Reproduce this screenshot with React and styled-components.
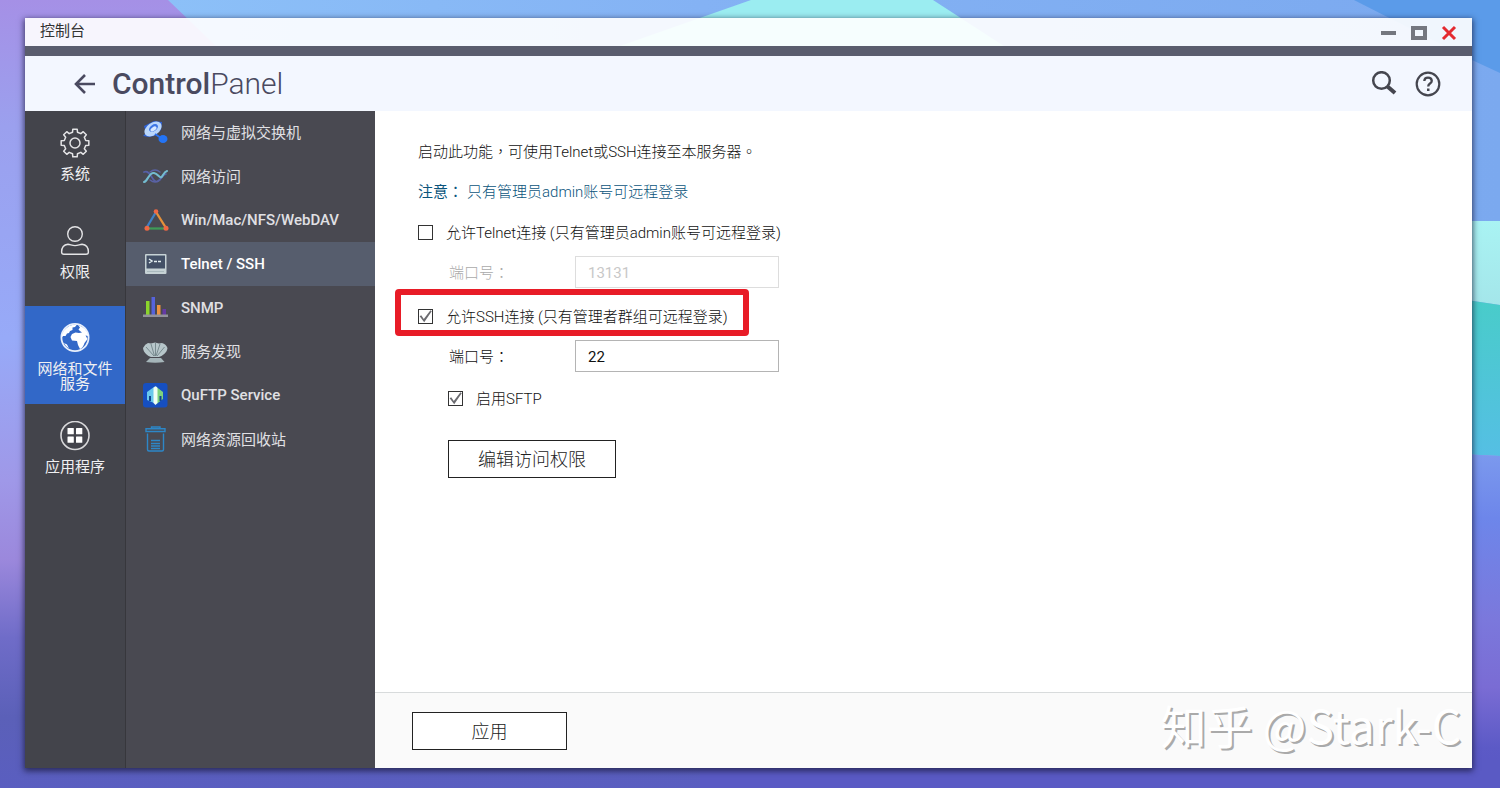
import React, { useState } from 'react'
import styled, { createGlobalStyle } from 'styled-components'

const GlobalStyle = createGlobalStyle`
    * {
        box-sizing: border-box;
    }
    body {
        margin: 0;
        font-family: Roboto, "Noto Sans CJK SC", sans-serif;
        font-size: 15px;
    }
    button, input {
        font: inherit;
    }
`

const Desktop = styled.div`
    position: relative;
    display: flex;
    min-height: 100vh;
    padding: 18px 28px 20px 25px;
    background: linear-gradient(#a590e6, #9ba0ee 16%, #97aaf8 43%, #9f98e8 61%, #9b88dc 71%, #6f6cc8 81%, #5b60b8 91%, #5a5ec0);
`

const Wallpaper = styled.svg`
    position: absolute;
    inset: 0;
    width: 100%;
    height: 100%;
`

const Window = styled.div`
    position: relative;
    flex: 1;
    display: flex;
    flex-direction: column;
    box-shadow: 0 2px 6px 1px rgba(20, 20, 50, 0.7);
`

const TitleBar = styled.div`
    display: flex;
    justify-content: space-between;
    height: 28px;
    padding: 0 15px;
    background: rgba(255, 255, 255, 0.91);
    color: #333;
    line-height: 26px;
`

const WindowButtons = styled.div`
    display: flex;
    align-items: flex-start;
    gap: 14px;
    padding-top: 7px;
`

const IconButton = styled.button`
    display: flex;
    padding: 0;
    border: 0;
    background: none;
    color: ${props => props.$color || '#45464f'};
    cursor: pointer;
`

const Header = styled.header`
    display: flex;
    align-items: center;
    height: 65px;
    padding: 0 31px 0 48px;
    border-top: 10px solid #5a5d6e;
    background: #f3f7ff;
`

const Title = styled.h1`
    flex: 1;
    margin: 0 0 0 16px;
    color: #4a4a60;
    font-size: 30px;
    font-weight: 300;

    strong {
        font-weight: 500;
    }
`

const HeaderTools = styled.div`
    display: flex;
    gap: 18px;
`

const Body = styled.div`
    flex: 1;
    display: flex;
`

const Rail = styled.nav`
    width: 101px;
    border-right: 1px solid #37373c;
    background: #43444b;
`

const RailList = styled.div`
    display: grid;
    grid-auto-rows: 1fr;
    height: 390px;
`

const RailItem = styled.a`
    display: flex;
    flex-direction: column;
    align-items: center;
    gap: 9px;
    padding: 17px 12px 0;
    background: ${props => props.$active ? '#3268c8' : 'none'};
    color: #f0f0f2;
    line-height: 15px;
    text-align: center;
    text-decoration: none;
`

const SubMenu = styled.nav`
    width: 249px;
    background: #494951;
`

const SubList = styled.div`
    display: grid;
    grid-auto-rows: 1fr;
    height: 350px;
`

const SubItem = styled.a`
    display: flex;
    align-items: center;
    gap: 12px;
    padding-left: 16px;
    background: ${props => props.$active ? '#565d6d' : 'none'};
    color: ${props => props.$active ? '#fff' : '#e0e0e4'};
    font-weight: ${props => props.$latin ? 500 : 400};
    text-decoration: none;
`

const SubLabel = styled.span`
    padding-bottom: ${props => props.$latin ? '0' : '2px'};
`

const Main = styled.main`
    flex: 1;
    display: flex;
    flex-direction: column;
    background: #fff;
    color: #111;
    font-family: Roboto, "Noto Sans CJK TC", sans-serif;
`

const Form = styled.div`
    flex: 1;
    padding: 21px 43px;
`

const Text = styled.p`
    margin: 0;
    color: ${props => props.$note ? '#0b557c' : '#111'};
    font-weight: 300;
    line-height: 40px;

    strong {
        font-weight: 400;
        margin-right: 4px;
    }
`

const Group = styled.section`
    margin-bottom: 4px;
`

const CheckRow = styled.label`
    position: relative;
    display: flex;
    align-items: center;
    gap: 13px;
    width: fit-content;
    height: ${props => props.$nested ? '44px' : '40px'};
    margin-left: ${props => props.$nested ? '30px' : '0'};
    font-weight: 300;
`

const LabelText = styled.span`
    padding-bottom: 2px;
`

const Marker = styled.span`
    position: absolute;
    inset: -7px -21px 0 -23px;
    border: 6px solid #e81c27;
    border-radius: 4px;
    pointer-events: none;
`

const Checkbox = styled.input`
    appearance: none;
    width: 15px;
    height: 15px;
    margin: 0;
    border: 1px solid #333;
    background: #fff;

    &:checked::before {
        content: "";
        display: block;
        height: 13px;
        background: #6b6b70;
        clip-path: polygon(5% 52%, 17% 44%, 37% 74%, 88% 6%, 98% 14%, 40% 98%);
    }
`

const PortRow = styled.label`
    display: grid;
    grid-template-columns: 126px 204px;
    align-items: center;
    height: 40px;
    margin-left: 31px;
    color: ${props => props.$off ? '#aaa' : '#111'};
    font-weight: 300;
`

const PortInput = styled.input`
    height: 32px;
    padding: 2px 12px 0;
    border: 1px solid #b4b4b4;
    border-radius: 0;
    background: #fff;
    color: #111;
    font-weight: 400;

    &:disabled {
        border-color: #ddd;
        color: #c8c8c8;
    }
`

const Button = styled.button`
    width: ${props => props.$wide ? '168px' : '155px'};
    height: 38px;
    padding: 0 0 2px;
    border: 1px solid #222;
    background: #fff;
    color: #222;
    font-size: 18px;
    font-weight: 300;
`

const EditRow = styled.div`
    padding: 20px 30px;
`

const Footer = styled.footer`
    height: 76px;
    padding: 19px 37px;
    border-top: 1px solid #d8dbdc;
    background: #fafafa;
`

const Watermark = styled.div`
    position: absolute;
    right: 11px;
    bottom: 12px;
    color: #fff;
    font-family: "Noto Sans CJK SC", sans-serif;
    font-size: 46px;
    line-height: 64px;
    text-shadow: 2px 2px 0 #aaa;
    pointer-events: none;
`

const gearPath = () => {
    const points = []
    for (let i = 0; i < 8; i++) {
        const steps = [[-13, 11], [-9, 14], [9, 14], [13, 11]]
        steps.forEach(([deg, r]) => {
            const a = (i * 45 + deg) * Math.PI / 180
            points.push(`${(15 + r * Math.sin(a)).toFixed(2)} ${(15 - r * Math.cos(a)).toFixed(2)}`)
        })
    }
    return `M${points.join('L')}Z`
}

const railIcons = {
    system: (
        <g fill="none" stroke="#e4e4e6" strokeWidth="1.5" strokeLinejoin="round">
            <path d={gearPath()} />
            <circle cx="15" cy="15" r="5" />
        </g>
    ),
    user: (
        <g fill="none" stroke="#e4e4e6" strokeWidth="1.4" strokeLinejoin="round">
            <circle cx="15" cy="8" r="7.3" />
            <path d="M8 18.3C4 18.8 1.6 22 1.6 26Q1.6 28.2 4 28.2H26Q28.4 28.2 28.4 26C28.4 22 26 18.8 22 18.3C20 18.3 18 19.6 15 19.6C12 19.6 10 18.3 8 18.3Z" />
        </g>
    ),
    network: (
        <g fill="#fff">
            <circle cx="15" cy="14.5" r="13.6" fill="none" stroke="#e8effb" strokeWidth="1.8" />
            <path d="M4 7.5Q9 1 17 1.5L15 4L12.5 4.5L12.5 7L10 8L9 10L7 10.5L5.500 13L3 13L1.5 15Q1.5 11 4 7.5Z" />
            <path d="M18 2L20 4.5L18.5 6.5L20 8L22 9.500L19 10L15.5 9.500L12 11L10.500 14L12 17.5L17 18L18 22L20 26Q23 25 24.5 20L27.5 16L25.5 12.5L28.500 13Q27 5 18 2Z" />
            <path d="M4 20L7 21.500L9 25.500Q6 24 4 20Z" />
        </g>
    ),
    apps: (
        <g fill="#fff">
            <circle cx="15" cy="14.500" r="14" fill="none" stroke="#d8d8da" strokeWidth="1.6" />
            <rect x="7.500" y="7" width="6.300" height="6.300" rx="0.500" />
            <rect x="16" y="7" width="6.300" height="6.300" rx="0.500" />
            <rect x="7.500" y="15.500" width="6.300" height="6.300" rx="0.500" />
            <rect x="16" y="15.500" width="6.300" height="6.300" rx="0.500" />
        </g>
    ),
}

const subIcons = {
    vswitch: (
        <g>
            <path d="M2 7L12 2L20 3L19 11L12 17L7 18L1 17L4 14Z" fill="#2f63d8" />
            <ellipse cx="11" cy="10" rx="9.500" ry="6.200" transform="rotate(-35 11 10)" fill="#b9d6fb" />
            <ellipse cx="11.500" cy="9" rx="5" ry="3.200" transform="rotate(-35 11.500 9)" fill="#3d75e4" />
            <ellipse cx="11.500" cy="10" rx="3.400" ry="1.900" transform="rotate(-35 11.500 10)" fill="#d7e8ff" />
            <path d="M13 15L19 19" stroke="#2a70f0" strokeWidth="2" />
            <ellipse cx="21" cy="20" rx="4.500" ry="4" fill="#2474f5" />
        </g>
    ),
    access: (
        <g fill="none" strokeLinecap="round">
            <path d="M2 9C8 6 10 18 14 18.500S20 12 24 11" stroke="#5660a8" strokeWidth="1.700" />
            <path d="M8 9Q13 5 18 9M8 17Q13 21 18 17" stroke="#5a62a4" strokeWidth="1.400" />
            <path d="M2 19C6 18 7 9 12 10S18 18 21 12Q23 8.500 25 8" stroke="#74bcd0" strokeWidth="2.100" />
        </g>
    ),
    share: (
        <g fill="none" strokeWidth="2.300">
            <path d="M14 5L5 20" stroke="#3e80c4" />
            <path d="M5 21.500H23" stroke="#3f9a58" />
            <path d="M14 5L24 21" stroke="#e5913a" />
            <g fill="#ef6844">
                <circle cx="14" cy="4.500" r="2.300" />
                <circle cx="5" cy="21.300" r="2.500" />
                <circle cx="24" cy="21.300" r="2.500" />
            </g>
        </g>
    ),
    telnet: (
        <g>
            <rect x="3" y="3" width="21.500" height="20" rx="1" fill="#c6d2d5" />
            <rect x="4.500" y="4.500" width="18.500" height="13" fill="#435066" />
            <path d="M7 8L10 10L7 12M12 10.500H15M16 10.500H19" fill="none" stroke="#e2edf0" strokeWidth="1.500" />
            <path d="M5 20.500H22" stroke="#a9b9bd" />
        </g>
    ),
    snmp: (
        <g>
            <rect x="4" y="7" width="3.500" height="14" fill="#8bd52c" />
            <rect x="9.500" y="3" width="3.500" height="18" fill="#5663dc" />
            <rect x="15" y="11" width="3.500" height="10" fill="#ef9340" />
            <rect x="20.500" y="15" width="3.500" height="6" fill="#653aa5" />
            <rect x="1" y="20.500" width="25" height="2.500" fill="#92929a" />
        </g>
    ),
    discovery: (
        <g>
            <path d="M1 10Q3 6 6 5L9 5.500L13 4.500L17 5.500L20 5Q24 6 25.500 10C25 15 20 18 17 19H9C6 18 1.500 15 1 10Z" fill="#b7c6ca" />
            <path d="M12 18L4 9M12.500 18L9 6M13.500 18V5M14 18L18 6M15 18L22.500 9" fill="none" stroke="#718388" strokeWidth="0.900" />
            <path d="M4 24L8 20H19L22.500 24Q13 25.500 4 24Z" fill="#a5b5b9" />
        </g>
    ),
    quftp: (
        <g>
            <rect x="1" y="1" width="24.500" height="24.500" rx="3" fill="#164fc0" />
            <path d="M5 10L12 5V21L5 18Z" fill="#69c9ec" />
            <path d="M14.500 5L21 10L21 17L14.500 22Z" fill="#7ed37c" />
            <path d="M11.500 6Q13.500 2.500 15.500 6V21L13.500 23L11.500 21Z" fill="#f0fff4" />
            <path d="M8 14V19M18.500 14V19" stroke="#124590" strokeWidth="2" />
        </g>
    ),
    recycle: (
        <g fill="none" stroke="#2d87c8" strokeWidth="1.400">
            <path d="M9.500 2.700V1H18V2.700M4 2.700H23V5.500H4Z" />
            <path d="M5.500 7.500V23.500Q5.500 25 7 25H20Q21.500 25 21.500 23.500V7.500" />
            <path d="M9 14.500H18M9 17.500H18M9 20H18M9 22.500H18" />
        </g>
    ),
}

const railItems = [
    { icon: 'system', label: '系统' },
    { icon: 'user', label: '权限' },
    { icon: 'network', label: '网络和文件服务', active: true },
    { icon: 'apps', label: '应用程序' },
]

const subItems = [
    { icon: 'vswitch', label: '网络与虚拟交换机' },
    { icon: 'access', label: '网络访问' },
    { icon: 'share', label: 'Win/Mac/NFS/WebDAV', latin: true },
    { icon: 'telnet', label: 'Telnet / SSH', latin: true, active: true },
    { icon: 'snmp', label: 'SNMP', latin: true },
    { icon: 'discovery', label: '服务发现' },
    { icon: 'quftp', label: 'QuFTP Service', latin: true },
    { icon: 'recycle', label: '网络资源回收站' },
]

function Background () {
    return (
        <Wallpaper viewBox="0 0 1500 788" preserveAspectRatio="none" aria-hidden="true">
            <defs>
                <linearGradient id="sky">
                    <stop offset="0" stopColor="#8cc0f8" />
                    <stop offset="0.4" stopColor="#84b2f4" />
                    <stop offset="1" stopColor="#7ba9ef" />
                </linearGradient>
                <linearGradient id="mint" x2="0" y2="1">
                    <stop offset="0" stopColor="#a9f3f3" />
                    <stop offset="1" stopColor="#a4e6ea" />
                </linearGradient>
                <linearGradient id="teal" x2="0" y2="1">
                    <stop offset="0" stopColor="#48cdc8" />
                    <stop offset="1" stopColor="#55bfe4" />
                </linearGradient>
                <linearGradient id="dusk" x2="0" y2="1">
                    <stop offset="0" stopColor="#7c9aee" />
                    <stop offset="0.2" stopColor="#6d86ea" />
                    <stop offset="0.5" stopColor="#7b78dc" />
                    <stop offset="0.7" stopColor="#7a6cd4" />
                    <stop offset="0.88" stopColor="#5c5ac6" />
                    <stop offset="1" stopColor="#5856c4" />
                </linearGradient>
            </defs>
            <path d="M168 0H1500V222H400Z" fill="url(#sky)" />
            <path d="M751 0H933L1004 46H620Z" fill="#9bedf1" />
            <path d="M1354 0H1500V73L1472 60Z" fill="#5b9be9" />
            <path d="M1400 221H1500V305L1400 290Z" fill="url(#mint)" />
            <path d="M1400 290L1500 305V456L1400 451Z" fill="url(#teal)" />
            <path d="M1400 451L1500 456V788H1400Z" fill="url(#dusk)" />
            <path d="M700 760H1500V788H700Z" fill="#5a5ac4" />
        </Wallpaper>
    )
}

function App () {
    const [telnet, setTelnet] = useState(false)
    const [ssh, setSsh] = useState(true)
    const [sftp, setSftp] = useState(true)

    return (
        <Desktop>
            <GlobalStyle />
            <Background />
            <Window>
                <TitleBar>
                    <span>控制台</span>
                    <WindowButtons>
                        <IconButton $color="#74777f" aria-label="最小化">
                            <svg width="17" height="16"><path d="M1 8H16" stroke="currentColor" strokeWidth="4" /></svg>
                        </IconButton>
                        <IconButton $color="#74777f" aria-label="最大化">
                            <svg width="16" height="16"><rect x="2" y="3" width="12" height="10" fill="none" stroke="currentColor" strokeWidth="4" /></svg>
                        </IconButton>
                        <IconButton $color="#e42a30" aria-label="关闭">
                            <svg width="16" height="16"><path d="M2 2L14 14M14 2L2 14" stroke="currentColor" strokeWidth="3" /></svg>
                        </IconButton>
                    </WindowButtons>
                </TitleBar>
                <Header>
                    <IconButton $color="#4a4a60" aria-label="返回">
                        <svg width="23" height="22"><path d="M22 11H3M12 2L3 11L12 20" fill="none" stroke="currentColor" strokeWidth="2.600" /></svg>
                    </IconButton>
                    <Title><strong>Control</strong>Panel</Title>
                    <HeaderTools>
                        <IconButton aria-label="搜索">
                            <svg width="26" height="26" fill="none" stroke="currentColor">
                                <circle cx="10.500" cy="9.500" r="8.300" strokeWidth="2.500" />
                                <path d="M16.500 15.500L24 22" strokeWidth="4" />
                            </svg>
                        </IconButton>
                        <IconButton aria-label="帮助">
                            <svg width="26" height="26" fill="none" stroke="currentColor">
                                <circle cx="13" cy="13" r="11.300" strokeWidth="2.200" />
                                <path d="M9.300 10Q9.500 6.700 13 6.700T16.800 9.800Q16.800 11.300 15 12.500T13.200 15.500" strokeWidth="2.300" />
                                <path d="M12 17.500H14.500V20H12Z" fill="currentColor" stroke="none" />
                            </svg>
                        </IconButton>
                    </HeaderTools>
                </Header>
                <Body>
                    <Rail>
                        <RailList>
                            {railItems.map(item => (
                                <RailItem href="#" key={item.icon} $active={item.active}>
                                    <svg width="30" height="30">{railIcons[item.icon]}</svg>
                                    {item.label}
                                </RailItem>
                            ))}
                        </RailList>
                    </Rail>
                    <SubMenu>
                        <SubList>
                            {subItems.map(item => (
                                <SubItem href="#" key={item.icon} $active={item.active} $latin={item.latin}>
                                    <svg width="27" height="27">{subIcons[item.icon]}</svg>
                                    <SubLabel $latin={item.latin}>{item.label}</SubLabel>
                                </SubItem>
                            ))}
                        </SubList>
                    </SubMenu>
                    <Main lang="zh-TW">
                        <Form>
                            <Text>启动此功能，可使用Telnet或SSH连接至本服务器。</Text>
                            <Text $note><strong>注意：</strong>只有管理员admin账号可远程登录</Text>
                            <Group>
                                <CheckRow>
                                    <Checkbox type="checkbox" checked={telnet} onChange={() => setTelnet(!telnet)} />
                                    <LabelText>允许Telnet连接 (只有管理员admin账号可远程登录)</LabelText>
                                </CheckRow>
                                <PortRow $off={!telnet}>
                                    <LabelText>端口号：</LabelText>
                                    <PortInput defaultValue="13131" disabled={!telnet} />
                                </PortRow>
                            </Group>
                            <Group>
                                <CheckRow>
                                    <Checkbox type="checkbox" checked={ssh} onChange={() => setSsh(!ssh)} />
                                    <LabelText>允许SSH连接 (只有管理者群组可远程登录)</LabelText>
                                    <Marker />
                                </CheckRow>
                                <PortRow $off={!ssh}>
                                    <LabelText>端口号：</LabelText>
                                    <PortInput defaultValue="22" disabled={!ssh} />
                                </PortRow>
                                <CheckRow $nested>
                                    <Checkbox type="checkbox" checked={sftp} onChange={() => setSftp(!sftp)} />
                                    <LabelText>启用SFTP</LabelText>
                                </CheckRow>
                                <EditRow>
                                    <Button $wide>编辑访问权限</Button>
                                </EditRow>
                            </Group>
                        </Form>
                        <Footer>
                            <Button>应用</Button>
                        </Footer>
                    </Main>
                </Body>
                <Watermark>知乎 @Stark-C</Watermark>
            </Window>
        </Desktop>
    )
}

export default App
